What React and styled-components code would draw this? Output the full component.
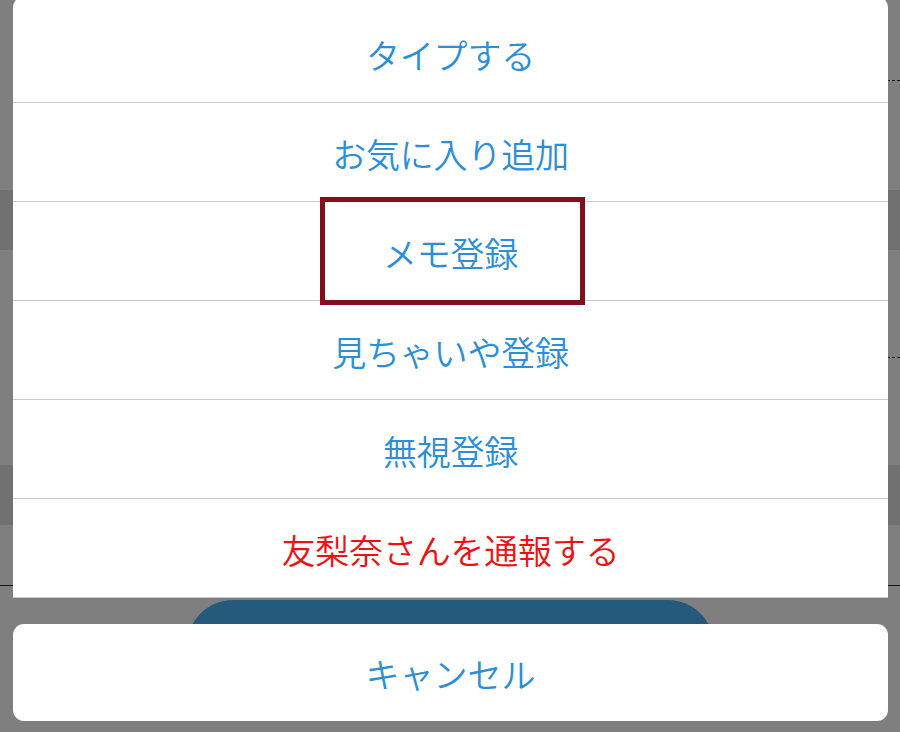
import React from "react";
import styled, { createGlobalStyle } from "styled-components";

const Global = createGlobalStyle`
  html, body { margin: 0; padding: 0; }
  body {
    background: #7f7f7f;
    font-family: "Noto Sans CJK JP", "Noto Sans", sans-serif;
    overflow: hidden;
  }
`;

const Page = styled.div`
  position: relative;
  width: 900px;
  height: 732px;
  overflow: hidden;
  display: flex;
  flex-direction: column;
`;

const BgBand = styled.div`
  height: ${(p) => p.$h}px;
  flex: none;
  background: ${(p) => (p.$dark ? "#717171" : "#7f7f7f")};
  display: flex;
  flex-direction: column;
  justify-content: flex-end;
`;

const DashLine = styled.div`
  align-self: flex-end;
  width: 40%;
  border-bottom: 1px dashed #161616;
`;

const SolidLine = styled.div`
  border-bottom: 1px solid #161616;
`;

const BgFooter = styled.div`
  display: flex;
  justify-content: center;
  padding-top: 14px;
`;

const BgButton = styled.div`
  width: 527px;
  height: 110px;
  margin-left: 1px;
  background: #265a7c;
  border-radius: 46px;
`;

const Overlay = styled.div`
  position: absolute;
  inset: 0;
  display: flex;
  flex-direction: column;
  padding: 0 12px 11px 13px;
`;

const Sheet = styled.div`
  margin-top: -5px;
  background: #fff;
  border-radius: 13px 13px 0 0;
  overflow: hidden;
  display: flex;
  flex-direction: column;
`;

const Row = styled.div`
  position: relative;
  box-sizing: border-box;
  height: ${(p) => (p.$first ? 108 : 99)}px;
  padding-top: ${(p) => (p.$first ? 9 : 0)}px;
  border-bottom: 1px solid #cacaca;
  display: flex;
  align-items: center;
  justify-content: center;
  font-size: 34px;
  font-weight: 350;
  line-height: 1;
  letter-spacing: -0.2px;
  color: ${(p) => (p.$danger ? "#f20f0f" : "#2b8ed8")};
`;

const Label = styled.span`
  display: block;
  margin-top: 3px;
`;

const Highlight = styled.div`
  position: absolute;
  left: 307px;
  width: 265px;
  top: -5px;
  bottom: -5px;
  box-sizing: border-box;
  border: 5px solid #860d1a;
  pointer-events: none;
`;

const Cancel = styled.div`
  margin-top: 26px;
  height: 97px;
  background: #fff;
  border-radius: 11px;
  display: flex;
  align-items: center;
  justify-content: center;
  font-size: 34px;
  font-weight: 350;
  line-height: 1;
  color: #2b8ed8;
`;

const items = [
  { label: "タイプする" },
  { label: "お気に入り追加" },
  { label: "メモ登録", marked: true },
  { label: "見ちゃいや登録" },
  { label: "無視登録" },
  { label: "友梨奈さんを通報する", danger: true },
];

export default function App() {
  return (
    <>
      <Global />
      <Page>
        <BgBand $h={81}>
          <DashLine />
        </BgBand>
        <BgBand $h={109} />
        <BgBand $h={60} $dark />
        <BgBand $h={108}>
          <DashLine />
        </BgBand>
        <BgBand $h={107} />
        <BgBand $h={60} $dark />
        <BgBand $h={61}>
          <SolidLine />
        </BgBand>
        <BgFooter>
          <BgButton />
        </BgFooter>

        <Overlay>
          <Sheet>
            {items.map((it, i) => (
              <Row key={it.label} $first={i === 0} $danger={it.danger}>
                <Label>{it.label}</Label>
                {it.marked && <Highlight />}
              </Row>
            ))}
          </Sheet>
          <Cancel>
            <Label>キャンセル</Label>
          </Cancel>
        </Overlay>
      </Page>
    </>
  );
}
